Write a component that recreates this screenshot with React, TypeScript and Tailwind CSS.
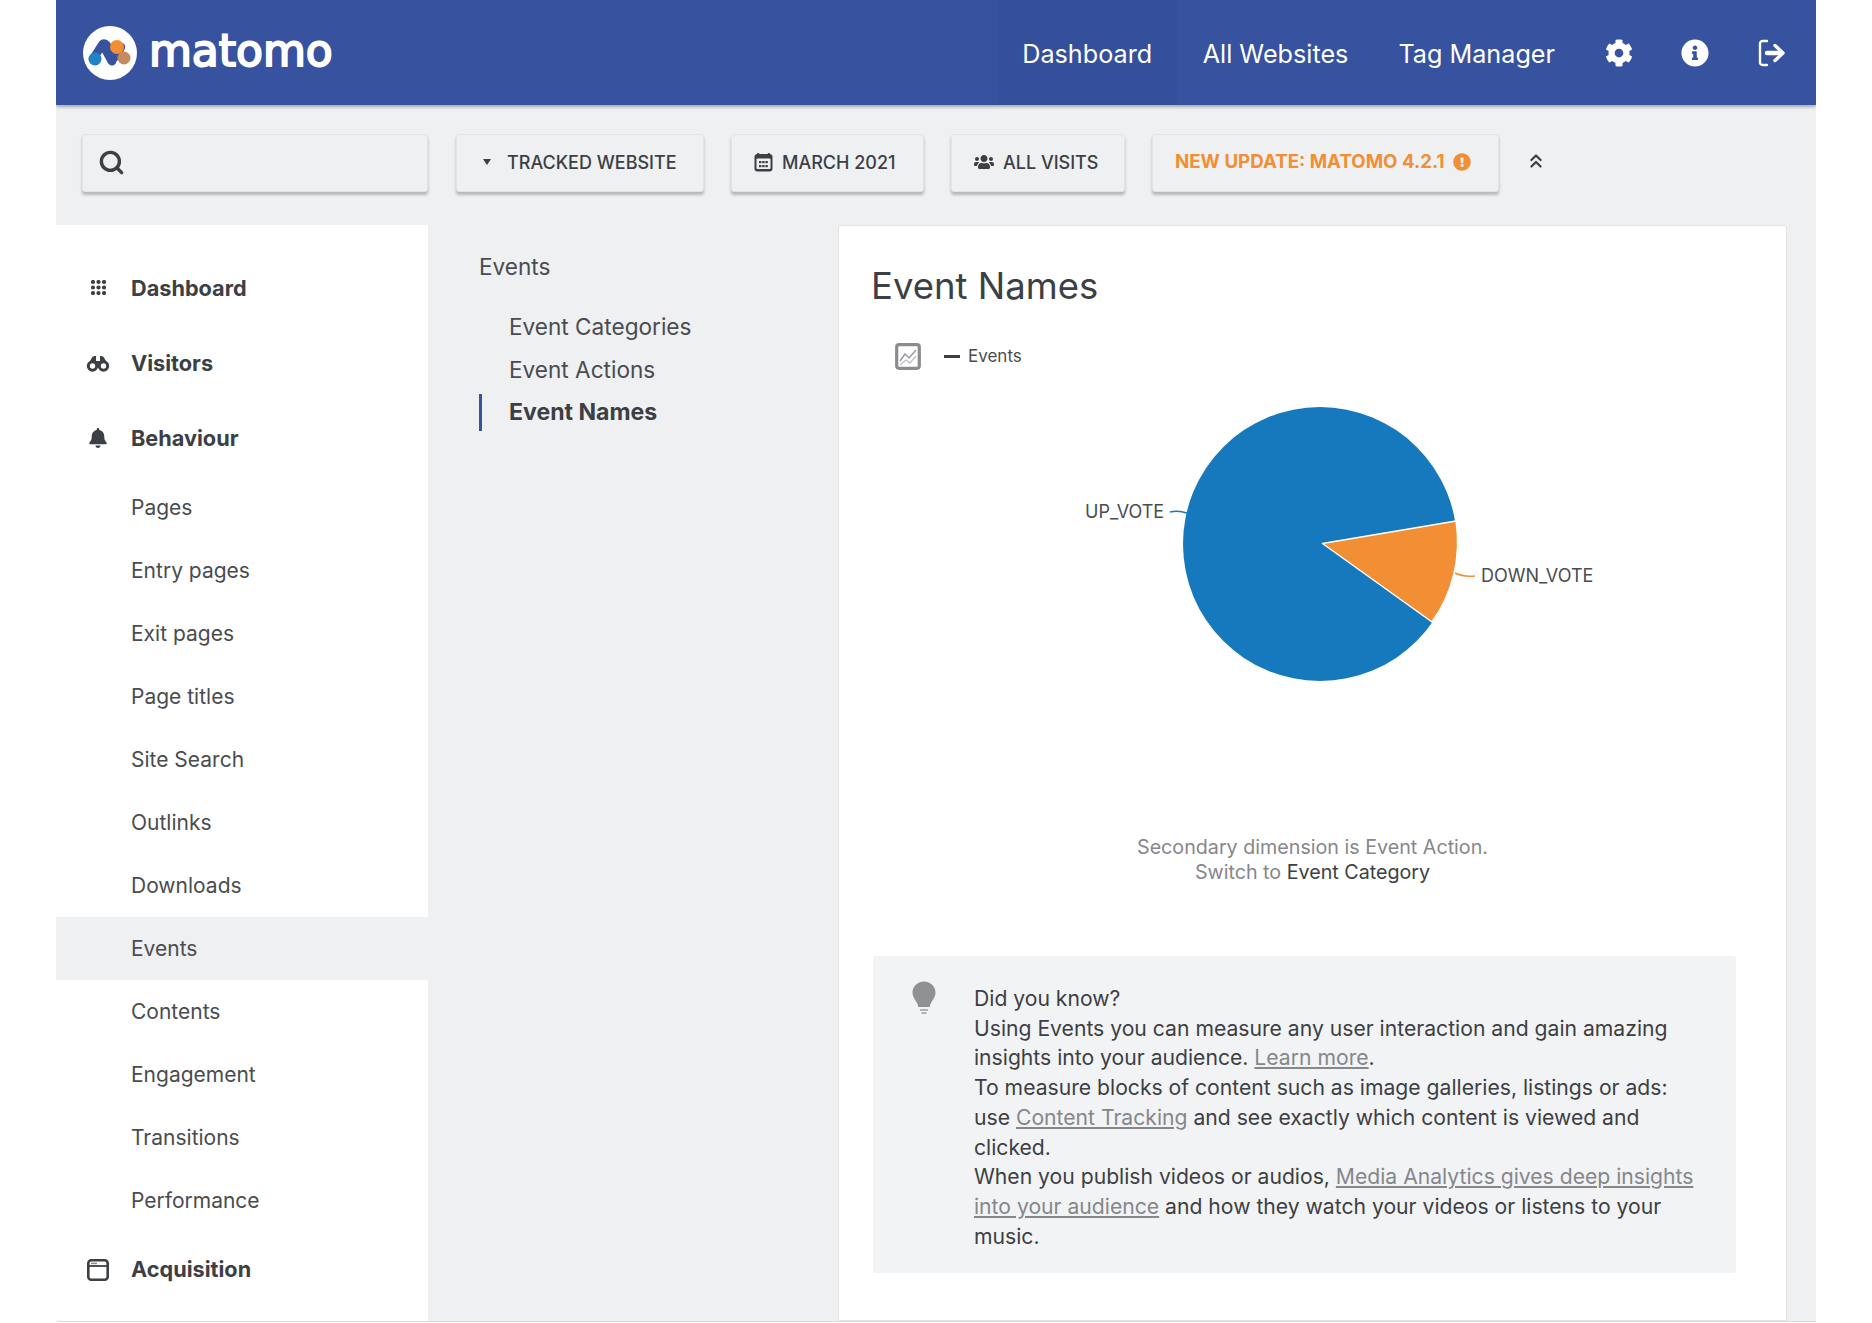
import { FaBell, FaCog, FaExclamationCircle, FaInfoCircle, FaUsers } from 'react-icons/fa'
import { ChevronsUp, Search } from 'lucide-react'

const subItems = ['Pages', 'Entry pages', 'Exit pages', 'Page titles', 'Site Search', 'Outlinks', 'Downloads', 'Events', 'Contents', 'Engagement', 'Transitions', 'Performance']

function Logo() {
  return (
    <div className="flex items-center gap-3">
      <svg width="54" height="54" viewBox="0 0 54 54" className="shrink-0">
        <circle cx="27" cy="27" r="27" fill="#fff" />
        <path d="M10 33 L19 19 Q21 16 23.5 19 L29 30 Q31 33 33 30 L38 21" fill="none" stroke="#37529f" strokeWidth="8.5" strokeLinecap="round" strokeLinejoin="round" />
        <path d="M22 22 L29 35" fill="none" stroke="#37529f" strokeWidth="9" strokeLinecap="round" />
        <circle cx="12" cy="33" r="6.5" fill="#1f83c4" />
        <circle cx="34" cy="21" r="7" fill="#f28e33" />
        <circle cx="41" cy="32" r="6.5" fill="#c58a60" />
      </svg>
      <span className="mb-[3px] font-['DejaVu_Sans',sans-serif] text-[44px] leading-none text-white [-webkit-text-stroke:2px_#fff]">matomo</span>
    </div>
  )
}

function LogoutIcon() {
  return (
    <svg width="28" height="28" viewBox="0 0 28 28" fill="none">
      <path d="M10 2H5.5A2.5 2.5 0 0 0 3 4.5v19A2.5 2.5 0 0 0 5.5 26H10" stroke="#fff" strokeWidth="2.4" strokeLinecap="round" />
      <path d="M10 14h14" stroke="#fff" strokeWidth="4.4" strokeLinecap="round" />
      <path d="M18 6.5L26 14l-8 7.5" stroke="#fff" strokeWidth="3.4" strokeLinecap="round" strokeLinejoin="round" />
    </svg>
  )
}

function GridIcon() {
  return (
    <svg width="15" height="15" viewBox="0 0 15 15" fill="#3c3f44" className="-mt-[2px]">
      {[2, 7.5, 13].map((y) => [2, 7.5, 13].map((x) => <circle key={`${x}-${y}`} cx={x} cy={y} r="2.1" />))}
    </svg>
  )
}

function BinocularsIcon() {
  return (
    <svg width="24" height="17" viewBox="0 0 24 17" fill="none" className="-mt-[1px]">
      <path d="M2 10 L6 2.5 Q7 1 8.5 1 H10 V6 H14 V1 H15.5 Q17 1 18 2.5 L22 10 Z" fill="#3c3f44" />
      <circle cx="6.5" cy="11" r="4.2" fill="#fff" stroke="#3c3f44" strokeWidth="3" />
      <circle cx="17.5" cy="11" r="4.2" fill="#fff" stroke="#3c3f44" strokeWidth="3" />
    </svg>
  )
}

function WindowIcon() {
  return (
    <svg width="22" height="22" viewBox="0 0 22 22" fill="none">
      <rect x="1.3" y="1.3" width="19.4" height="19.4" rx="3" stroke="#3c3f44" strokeWidth="2.6" />
      <path d="M1.5 7h19" stroke="#3c3f44" strokeWidth="1.8" />
      <path d="M4 4.4h6" stroke="#8a8c90" strokeWidth="1.6" />
    </svg>
  )
}

function CalendarIcon() {
  return (
    <svg width="19" height="20" viewBox="0 0 19 20" className="mr-[9px]">
      <rect x="0.5" y="2" width="18" height="17.5" rx="3" fill="#3c3f44" />
      <rect x="3" y="1" width="2.4" height="3" rx="1" fill="#3c3f44" />
      <rect x="13.6" y="1" width="2.4" height="3" rx="1" fill="#3c3f44" />
      <rect x="2.5" y="6.5" width="14" height="10.5" rx="1" fill="#eef0f2" />
      {[9, 13].map((y) => [5, 8.2, 11.4].map((x) => <rect key={`${x}-${y}`} x={x} y={y} width="2.4" height="2.2" fill="#3c3f44" />))}
    </svg>
  )
}

function BulbIcon() {
  return (
    <svg width="24" height="35" viewBox="0 0 24 35" className="shrink-0">
      <path d="M12 0.5C5.5 0.5 0.5 5.5 0.5 11.5c0 4.6 3 7.6 4.5 10.5 1 2 1 3 1.2 4h11.6c.2-1 .2-2 1.2-4 1.5-2.9 4.5-5.9 4.5-10.5C23.5 5.5 18.5 0.5 12 0.5z" fill="#8f9194" />
      <path d="M8 29h8M9.5 32h5" stroke="#b0b2b5" strokeWidth="1.8" />
    </svg>
  )
}

function ChartToggleIcon() {
  return (
    <svg width="26" height="27" viewBox="0 0 26 27" fill="none">
      <rect x="1.7" y="1.7" width="22.6" height="23.6" rx="2.5" fill="#fff" stroke="#8a8c90" strokeWidth="3.2" />
      <path d="M5 18l5-7 4 4 7-8" stroke="#9b9da0" strokeWidth="1.5" />
      <path d="M5 22l6-5 4 3 6-7" stroke="#c2c3c5" strokeWidth="1.5" />
    </svg>
  )
}

function ToolButton({ className, children }: { className: string; children: React.ReactNode }) {
  return (
    <div className={`flex h-[58px] shrink-0 items-center rounded-[3px] border border-[#e2e3e5] bg-[#eef0f2] pb-[2px] shadow-[0_3px_3px_rgba(0,0,0,0.24)] ${className}`}>
      {children}
    </div>
  )
}

function GroupRow({ icon, label }: { icon: React.ReactNode; label: string }) {
  return (
    <div className="flex h-[75px] items-center">
      <div className="flex w-[75px] shrink-0 justify-center pl-[9px]">{icon}</div>
      <span className="text-[21.7px] font-bold text-[#3c3f44]">{label}</span>
    </div>
  )
}

function PieChart() {
  return (
    <svg width="947" height="320" viewBox="0 0 947 320" className="block">
      <circle cx="481" cy="143" r="137" fill="#1779bd" />
      <path d="M483.5 142.5 L617 120 A137 137 0 0 1 593 221 Z" fill="#f28e33" stroke="#fff" strokeWidth="1.5" strokeLinejoin="round" />
      <path d="M331 111 q8 -2 17 1" fill="none" stroke="#1779bd" strokeWidth="1.5" />
      <path d="M616 172 q8 4 20 3" fill="none" stroke="#f28e33" strokeWidth="1.5" />
      <text x="246" y="117" fontSize="18" fill="#4a4c50">UP_VOTE</text>
      <text x="642" y="181" fontSize="18" fill="#4a4c50">DOWN_VOTE</text>
    </svg>
  )
}

export default function App() {
  return (
    <div className="h-[1323px] w-[1872px] overflow-hidden bg-white pl-[56px] font-['Inter',sans-serif]">
      <div className="flex h-[1322px] w-[1760px] flex-col overflow-hidden rounded-bl-[4px] border-b border-[#d9d9d9] bg-[#eef0f2]">
        {/* Header */}
        <header className="flex h-[105px] shrink-0 items-center justify-between bg-[#37529f] pl-[27px] pr-[31px] shadow-[0_2px_3px_rgba(0,0,0,0.3)]">
          <Logo />
          <nav className="flex h-full items-center text-[25.2px] text-white">
            <div className="flex h-full w-[179px] items-center justify-center bg-[#35509b] pt-[4px]">Dashboard</div>
            <div className="ml-[26px] pt-[4px]">All Websites</div>
            <div className="ml-[50px] pt-[4px]">Tag Manager</div>
            <FaCog className="ml-[50px] h-[28px] w-[28px]" />
            <FaInfoCircle className="ml-[48px] h-[28px] w-[28px]" />
            <div className="ml-[48px]"><LogoutIcon /></div>
          </nav>
        </header>

        {/* Toolbar */}
        <div className="flex h-[120px] shrink-0 items-start pl-[26px] pt-[29px]">
          <ToolButton className="w-[346px] pl-[15px]">
            <Search className="h-[27px] w-[27px] text-[#3c3f44]" strokeWidth={3} />
          </ToolButton>
          <ToolButton className="ml-[28px] w-[248px] pl-[26px] text-[18px] font-medium text-[#3c3f44]">
            <span className="mr-[16px] h-0 w-0 border-x-[4px] border-t-[6px] border-x-transparent border-t-[#3c3f44]" />
            TRACKED WEBSITE
          </ToolButton>
          <ToolButton className="ml-[27px] w-[193px] pl-[22px] text-[18px] font-medium text-[#3c3f44]">
            <CalendarIcon />
            MARCH 2021
          </ToolButton>
          <ToolButton className="ml-[27px] w-[174px] pl-[22px] text-[18px] font-medium text-[#3c3f44]">
            <FaUsers className="mr-[9px] h-[20px] w-[20px]" />
            ALL VISITS
          </ToolButton>
          <ToolButton className="ml-[27px] w-[347px] pl-[22px] text-[18.7px] font-bold text-[#f28e33]">
            NEW UPDATE: MATOMO 4.2.1
            <FaExclamationCircle className="ml-[8px] h-[18px] w-[18px]" />
          </ToolButton>
          <ChevronsUp className="ml-[26px] mt-[16px] h-[22px] w-[22px] text-[#3c3f44]" strokeWidth={2.4} />
        </div>

        <div className="flex min-h-0 flex-1">
          {/* Sidebar */}
          <aside className="w-[372px] shrink-0 bg-white pt-[26px]">
            <GroupRow icon={<GridIcon />} label="Dashboard" />
            <GroupRow icon={<BinocularsIcon />} label="Visitors" />
            <GroupRow icon={<FaBell className="-mt-[2px] h-[20px] w-[20px] text-[#3c3f44]" />} label="Behaviour" />
            {subItems.map((item) => (
              <div key={item} className={`flex h-[63px] items-center pl-[75px] text-[21px] text-[#4a4c50] ${item === 'Events' ? 'bg-[#eef0f2]' : ''}`}>
                {item}
              </div>
            ))}
            <GroupRow icon={<WindowIcon />} label="Acquisition" />
          </aside>

          {/* Secondary menu */}
          <div className="w-[410px] shrink-0 pl-[51px] pt-[27px] text-[22.6px] text-[#4a4c50]">
            <div className="h-[30px] leading-[30px]">Events</div>
            <div className="mt-[23px] h-[43px] pl-[30px] leading-[43px]">Event Categories</div>
            <div className="h-[43px] pl-[30px] leading-[43px]">Event Actions</div>
            <div className="flex h-[43px] items-center">
              <div className="h-[37px] w-[3px] bg-[#37529f]" />
              <span className="pl-[27px] text-[23.1px] font-bold text-[#3c3f44]">Event Names</span>
            </div>
          </div>

          {/* Card */}
          <main className="w-[949px] shrink-0 rounded-t-[3px] border border-[#e2e3e5] bg-white">
            <h1 className="pl-[32px] pt-[36px] text-[36.5px] leading-[48px] text-[#3c3f44]">Event Names</h1>
            <div className="mt-[33px] flex h-[27px] items-center pl-[56px]">
              <ChartToggleIcon />
              <div className="ml-[23px] h-[3px] w-[16px] bg-[#3c3f44]" />
              <span className="ml-[8px] pt-[1px] text-[17px] text-[#4a4c50]">Events</span>
            </div>
            <div className="mt-[31px]">
              <PieChart />
            </div>
            <div className="mt-[114px] text-center text-[19.7px] leading-[25px] text-[#85878b]">
              <div>Secondary dimension is Event Action.</div>
              <div>Switch to <span className="text-[#3c3f44]">Event Category</span></div>
            </div>
            <div className="ml-[34px] mt-[71px] flex h-[317px] w-[863px] rounded-[3px] bg-[#f2f3f5] pl-[39px] pt-[25px]">
              <BulbIcon />
              <p className="ml-[38px] mt-[3px] w-[725px] text-[21.15px] leading-[29.7px] text-[#3c3f44]">
                Did you know?<br />
                Using Events you can measure any user interaction and gain amazing insights into your audience. <a className="text-[#85878b] underline">Learn more</a>.<br />
                To measure blocks of content such as image galleries, listings or ads: use <a className="text-[#85878b] underline">Content Tracking</a> and see exactly which content is viewed and clicked.<br />
                When you publish videos or audios, <a className="text-[#85878b] underline">Media Analytics gives deep insights into your audience</a> and how they watch your videos or listens to your music.
              </p>
            </div>
          </main>
        </div>
      </div>
    </div>
  )
}
